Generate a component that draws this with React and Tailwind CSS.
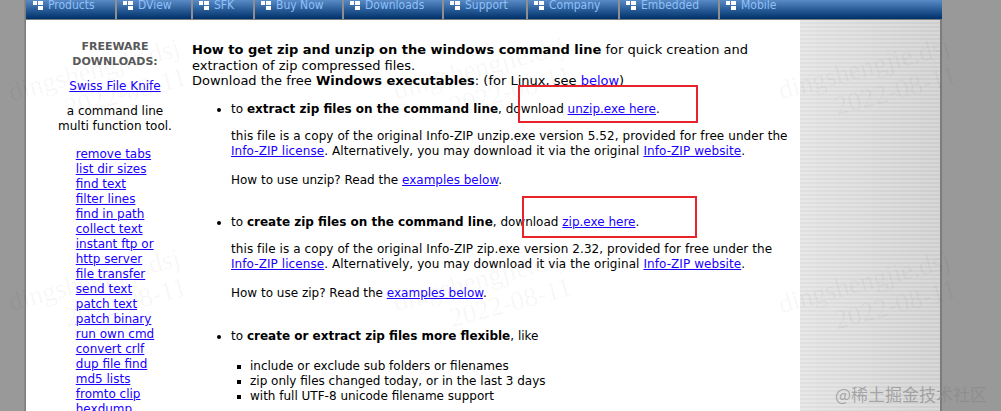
import React from "react";

const NAV = [
  { label: "Products", w: "w-[89px]", first: true },
  { label: "DView", w: "w-[76px]" },
  { label: "SFK", w: "w-[62px]" },
  { label: "Buy Now", w: "w-[89px]" },
  { label: "Downloads", w: "w-[100px]" },
  { label: "Support", w: "w-[84px]" },
  { label: "Company", w: "w-[92px]" },
  { label: "Embedded", w: "w-[100px]" },
  { label: "Mobile", w: "flex-1" },
];

const LINKS = [
  "remove tabs",
  "list dir sizes",
  "find text",
  "filter lines",
  "find in path",
  "collect text",
  ["instant ftp or", "http server"],
  "file transfer",
  "send text",
  "patch text",
  "patch binary",
  "run own cmd",
  "convert crlf",
  "dup file find",
  "md5 lists",
  "fromto clip",
  "hexdump",
];

function NavIcon() {
  return (
    <svg width="10" height="9" viewBox="0 0 10 9" className="shrink-0">
      <rect x="0" y="0" width="4" height="4" fill="#fff" />
      <rect x="5" y="0" width="5" height="4" fill="#fff" />
      <rect x="5" y="5" width="5" height="4" fill="#fff" />
    </svg>
  );
}

function A({ children }) {
  return <a className="text-[#1a00ff] underline cursor-pointer">{children}</a>;
}

function Bullet({ children, className = "" }) {
  return (
    <div className={"flex " + className}>
      <div className="w-[39px] shrink-0 flex justify-end pr-[10px] pt-[6px]">
        <span className="block w-[4px] h-[4px] rounded-full bg-black" />
      </div>
      <div className="flex-1">{children}</div>
    </div>
  );
}

function SubBullet({ children }) {
  return (
    <div className="flex">
      <div className="w-[58px] shrink-0 flex justify-end pr-[9px] pt-[6px]">
        <span className="block w-[4px] h-[4px] bg-black" />
      </div>
      <div className="flex-1">{children}</div>
    </div>
  );
}

function Watermark({ className }) {
  return (
    <div
      className={
        "absolute origin-top-left -rotate-[15deg] text-[27px] leading-[30px] text-black/[0.045] whitespace-nowrap pointer-events-none " +
        className
      }
      style={{ fontFamily: '"Liberation Serif", "DejaVu Serif", serif' }}
    >
      <div>dingshengjie.dsj</div>
      <div className="pl-[50px]">2022-08-11</div>
    </div>
  );
}

export default function App() {
  return (
    <div
      className="relative w-[1001px] h-[411px] overflow-hidden bg-[#999999] flex items-start"
      style={{ fontFamily: '"DejaVu Sans", Verdana, sans-serif' }}
    >
      {/* left gray + shadow */}
      <div className="w-[24px] h-[411px] shrink-0 bg-[#999999]" />
      <div className="w-[2px] h-[411px] shrink-0 bg-gradient-to-r from-[#8e8e8e] to-[#7a7a7a]" />

      {/* page */}
      <div className="w-[916px] shrink-0 flex flex-col">
        {/* nav */}
        <div className="h-[20px] shrink-0 flex border-b border-[#7f7f7f] bg-gradient-to-b from-[#5a8bc6] via-[#2a5e98] to-[#00306a]">
          {NAV.map((n) => (
            <div
              key={n.label}
              className={
                n.w +
                " shrink-0 flex items-start gap-[5px] " +
                (n.first ? "pl-[7px]" : "border-l-2 border-[#8f8f8f] pl-[6px]")
              }
            >
              <div className="pt-[1px]">
                <NavIcon />
              </div>
              <span
                className="text-[12px] leading-[12px] -mt-[1px] text-[#8fc0fb] whitespace-nowrap"
                style={{ fontFamily: '"DejaVu Sans Condensed", "Liberation Sans", sans-serif' }}
              >
                {n.label}
              </span>
            </div>
          ))}
        </div>

        {/* content row */}
        <div className="flex h-[391px] shrink-0 bg-white">
          {/* left column */}
          <div className="w-[166px] shrink-0 pl-[12px] pt-[19px] text-center text-[12px] leading-[15px] text-black">
            <div className="text-[11px] font-bold text-[#595959] leading-[15px]">
              FREEWARE
              <br />
              DOWNLOADS:
            </div>
            <div className="mt-[10px]">
              <A>Swiss File Knife</A>
            </div>
            <div className="mt-[10px]">
              a command line
              <br />
              multi function tool.
            </div>
            <div className="mt-[13px] flex justify-center">
              <div className="text-left">
                {LINKS.map((l, i) =>
                  Array.isArray(l) ? (
                    <div key={i}>
                      <A>
                        {l[0]}
                        <br />
                        {l[1]}
                      </A>
                    </div>
                  ) : (
                    <div key={i}>
                      <A>{l}</A>
                    </div>
                  )
                )}
              </div>
            </div>
          </div>

          {/* main column */}
          <div className="w-[608px] shrink-0 pt-[22px] text-black whitespace-nowrap">
            <div className="text-[13px] leading-[15.5px]">
              <b>How to get zip and unzip on the windows command line</b> for quick creation and
              <br />
              extraction of zip compressed files.
              <br />
              Download the free <b>Windows executables</b>: (for Linux, see <A>below</A>)
            </div>

            <div className="text-[12px] leading-[15px]">
              <Bullet className="mt-[13px]">
                <div>
                  to <b>extract zip files on the command line</b>, download <A>unzip.exe here</A>.
                </div>
                <div className="mt-[12px] tracking-[0.08px]">
                  this file is a copy of the original Info-ZIP unzip.exe version 5.52, provided for free under the
                  <br />
                  <A>Info-ZIP license</A>. Alternatively, you may download it via the original <A>Info-ZIP website</A>.
                </div>
                <div className="mt-[14px]">
                  How to use unzip? Read the <A>examples below</A>.
                </div>
              </Bullet>

              <Bullet className="mt-[27px]">
                <div>
                  to <b>create zip files on the command line</b>, download <A>zip.exe here</A>.
                </div>
                <div className="mt-[12px] tracking-[0.08px]">
                  this file is a copy of the original Info-ZIP zip.exe version 2.32, provided for free under the
                  <br />
                  <A>Info-ZIP license</A>. Alternatively, you may download it via the original <A>Info-ZIP website</A>.
                </div>
                <div className="mt-[14px]">
                  How to use zip? Read the <A>examples below</A>.
                </div>
              </Bullet>

              <Bullet className="mt-[28px]">
                <div>
                  to <b>create or extract zip files more flexible</b>, like
                </div>
              </Bullet>
              <div className="mt-[15px]">
                <SubBullet>include or exclude sub folders or filenames</SubBullet>
                <SubBullet>zip only files changed today, or in the last 3 days</SubBullet>
                <SubBullet>with full UTF-8 unicode filename support</SubBullet>
              </div>
            </div>
          </div>

          {/* right striped column */}
          <div className="w-[140px] shrink-0 bg-[linear-gradient(90deg,rgba(255,255,255,0.25),rgba(0,0,0,0.04)),repeating-linear-gradient(180deg,#e0e0e0_0px,#e0e0e0_2px,#d6d6d6_2px,#d6d6d6_4px)]" />
          <div className="w-[2px] shrink-0 bg-[#7c7c7c]" />
        </div>
      </div>

      <div className="flex-1 h-[411px] bg-[#999999]" />

      {/* red highlight boxes */}
      <div className="absolute left-[518px] top-[85px] w-[180px] h-[38px] border-2 border-[#e8242a] pointer-events-none" />
      <div className="absolute left-[522px] top-[196px] w-[175px] h-[42px] border-2 border-[#e8242a] pointer-events-none" />

      {/* watermarks */}
      <Watermark className="left-[5px] top-[78px]" />
      <Watermark className="left-[390px] top-[76px]" />
      <Watermark className="left-[775px] top-[76px]" />
      <Watermark className="left-[5px] top-[288px]" />
      <Watermark className="left-[390px] top-[288px]" />
      <Watermark className="left-[775px] top-[290px]" />

      <div
        className="absolute left-[835px] top-[383px] text-[17px] leading-[22px] text-[#8a8a8a]/70 whitespace-nowrap pointer-events-none"
        style={{ fontFamily: '"Noto Sans CJK SC", "DejaVu Sans", sans-serif' }}
      >
        @稀土掘金技术社区
      </div>
    </div>
  );
}
